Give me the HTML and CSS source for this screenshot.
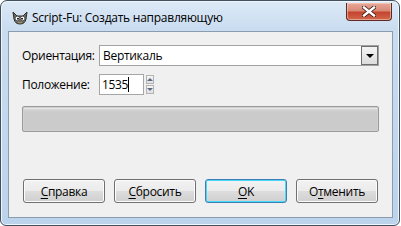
FILE: index.html
```html
<!DOCTYPE html>
<html>
<head>
<meta charset="utf-8">
<link rel="stylesheet" href="styles.css">
</head>
<body>
<div class="window">
  <div class="titlebar">
    <svg class="appicon" width="18" height="16" viewBox="0 0 18 16">
      <path d="M2 2 L6 6 L12 6 L16 2 L15 9 Q14 14 9 14 Q4 14 3 9 Z" fill="#6c6c64" stroke="#2e2e2a" stroke-width="1"/>
      <circle cx="6.5" cy="8.5" r="2.3" fill="#fff" stroke="#222" stroke-width="0.6"/>
      <circle cx="11.5" cy="8.5" r="2.3" fill="#fff" stroke="#222" stroke-width="0.6"/>
      <circle cx="7" cy="8.8" r="1" fill="#111"/>
      <circle cx="11" cy="8.8" r="1" fill="#111"/>
      <path d="M7 12 Q9 13.5 11 12" stroke="#a89060" stroke-width="1.2" fill="none"/>
    </svg>
    <span class="title">Script-Fu: Создать направляющую</span>
    <div class="close">
      <svg width="14" height="11" viewBox="0 0 14 11">
        <path d="M2 1.5 L12 9.5 M12 1.5 L2 9.5" stroke="#3a1a14" stroke-width="4" stroke-linecap="square"/>
        <path d="M2 1.5 L12 9.5 M12 1.5 L2 9.5" stroke="#ffffff" stroke-width="2.4" stroke-linecap="square"/>
      </svg>
    </div>
  </div>
  <div class="client">
    <div class="row first">
      <span class="label">Ориентация:</span>
      <div class="combo">
        <span class="combo-text">Вертикаль</span>
        <div class="combo-btn"><span class="tri"></span></div>
      </div>
    </div>
    <div class="row second">
      <span class="label">Положение:</span>
      <div class="spin-entry"><span>1535</span><span class="caret"></span></div>
      <div class="spin-btns">
        <div class="spin-up"><span class="up"></span></div>
        <div class="spin-down"><span class="down"></span></div>
      </div>
    </div>
    <div class="progress"></div>
    <div class="buttons">
      <div class="btn"><u>С</u>правка</div>
      <div class="btn"><u>С</u>бросить</div>
      <div class="btn default"><u>O</u>K</div>
      <div class="btn">О<u>т</u>менить</div>
    </div>
  </div>
</div>
</body>
</html>
```
FILE: styles.css
```css
html, body {
  margin: 0;
  padding: 0;
  background: #ffffff;
}
body {
  font-family: "Open Sans", "Noto Sans", sans-serif;
  font-size: 12px;
  color: #000;
}
.window {
  box-sizing: border-box;
  width: 400px;
  height: 226px;
  border: 1px solid #42505e;
  border-radius: 7px 7px 6px 6px;
  background: linear-gradient(to bottom, #dce9f6 0px, #c9dcf0 30px, #bcd3ec 100%);
  display: flex;
  flex-direction: column;
  box-shadow: inset 0 0 0 1px #eef5fc;
}
.titlebar {
  height: 30px;
  display: flex;
  align-items: center;
  padding: 0 7px 0 10px;
  position: relative;
}
.appicon {
  margin-top: 4px;
  margin-right: 3px;
}
.title {
  margin-top: 3px;
  font-family: "Open Sans", sans-serif;
  font-size: 12px;
  letter-spacing: -0.25px;
  color: #000;
}
.close {
  margin-left: auto;
  align-self: flex-start;
  margin-top: 2px;
  width: 46px;
  height: 18px;
  box-sizing: border-box;
  border: 1px solid #5b2a22;
  border-top: none;
  border-radius: 0 0 4px 4px;
  background: linear-gradient(to bottom, #e8a898 0%, #d88a78 45%, #c5452e 55%, #d0684c 100%);
  display: flex;
  align-items: center;
  justify-content: center;
  box-shadow: inset 0 0 0 1px rgba(255,220,210,0.5);
}
.client {
  flex: 1;
  margin: 0 6px 7px 7px;
  background: #f0f0f0;
  border: 1px solid #8a9cb0;
  display: flex;
  flex-direction: column;
  padding: 0 13px 0 13px;
}
.row {
  display: flex;
  align-items: center;
}
.row.first {
  margin-top: 13px;
}
.row.second {
  margin-top: 8px;
}
.label {
  width: 77px;
  font-size: 12px;
  letter-spacing: -0.3px;
}
.combo {
  flex: 1;
  height: 21px;
  box-sizing: border-box;
  border: 1px solid #a2a2a2;
  background: #fff;
  display: flex;
  align-items: center;
}
.combo-text {
  padding-left: 3px;
  letter-spacing: -0.3px;
}
.combo-btn {
  margin-left: auto;
  width: 17px;
  height: 19px;
  box-sizing: border-box;
  border: 1px solid #6e6e6e;
  background: linear-gradient(to bottom, #f4f4f4, #dcdcdc);
  display: flex;
  align-items: center;
  justify-content: center;
}
.tri {
  width: 0;
  height: 0;
  border-left: 4px solid transparent;
  border-right: 4px solid transparent;
  border-top: 4px solid #000;
  margin-top: 1px;
}
.spin-entry {
  width: 45px;
  height: 21px;
  box-sizing: border-box;
  border: 1px solid #a6a6a6;
  background: #fff;
  display: flex;
  align-items: center;
  padding-left: 2px;
  letter-spacing: -0.4px;
}
.caret {
  width: 1px;
  height: 15px;
  background: #000;
  margin-left: 0px;
}
.spin-btns {
  margin-left: 2px;
  display: flex;
  flex-direction: column;
  gap: 1px;
}
.spin-up, .spin-down {
  width: 8px;
  height: 9px;
  box-sizing: border-box;
  border: 1px solid #b4b4b4;
  background: linear-gradient(to bottom, #f6f6f6, #e0e0e0);
  display: flex;
  align-items: center;
  justify-content: center;
}
.up {
  width: 0; height: 0;
  border-left: 3px solid transparent;
  border-right: 3px solid transparent;
  border-bottom: 3px solid #5a6a84;
}
.down {
  width: 0; height: 0;
  border-left: 3px solid transparent;
  border-right: 3px solid transparent;
  border-top: 3px solid #5a6a84;
}
.progress {
  margin-top: 11px;
  height: 26px;
  box-sizing: border-box;
  border: 1px solid #9a9a9a;
  border-radius: 2px;
  background: linear-gradient(to bottom, #f2f2f2 0px, #f2f2f2 1px, #d8d8d8 2px, #cbcbcb 5px, #cbcbcb 100%);
  box-shadow: inset 0 0 0 1px #d0d0d0;
}
.buttons {
  margin-top: auto;
  margin-bottom: 14px;
  display: flex;
  gap: 9px;
  padding-left: 1px;
}
.btn {
  width: 82px;
  height: 24px;
  box-sizing: border-box;
  border: 1px solid #707070;
  border-radius: 3px;
  background: linear-gradient(to bottom, #f2f2f2 0%, #ebebeb 50%, #dddddd 50%, #cfcfcf 100%);
  box-shadow: inset 0 0 0 1px #fcfcfc;
  display: flex;
  align-items: center;
  justify-content: center;
  font-size: 12px;
  letter-spacing: -0.3px;
}
.btn u {
  text-decoration: underline;
  text-underline-offset: 2px;
}
.btn.default {
  border-color: #3c7fb1;
  box-shadow: inset 0 0 0 1px #48d8fb;
  background: linear-gradient(to bottom, #eaf6fd 0%, #d9f0fc 50%, #bee6fd 50%, #a7d9f5 100%);
  background: linear-gradient(to bottom, #f2f2f2 0%, #ebebeb 50%, #dddddd 50%, #cfcfcf 100%);
}
```
